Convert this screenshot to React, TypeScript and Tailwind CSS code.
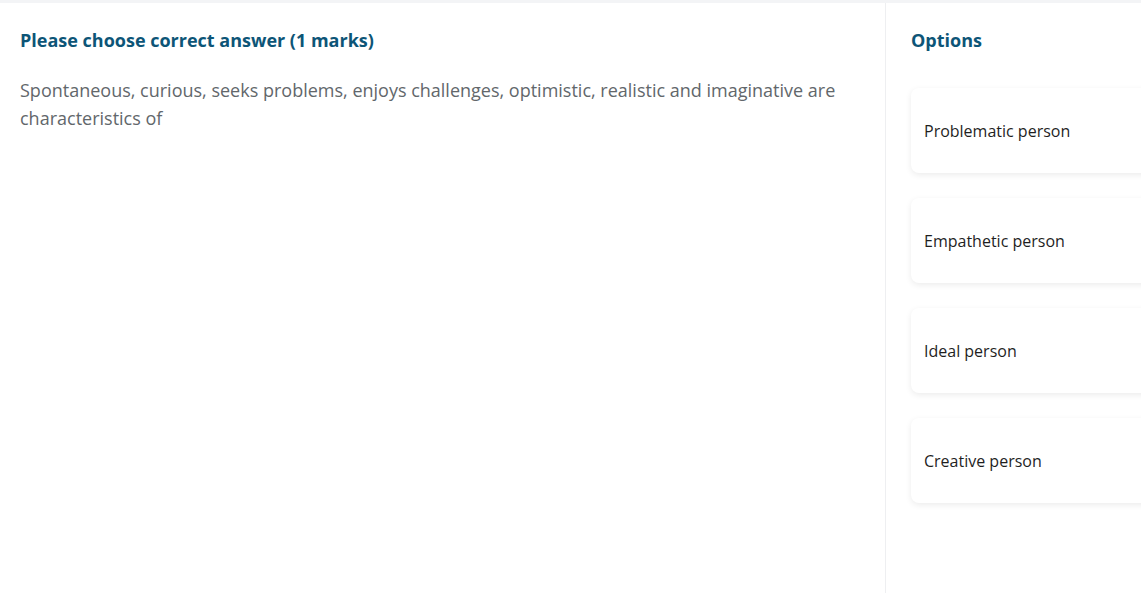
import React from "react";

const options = [
  "Problematic person",
  "Empathetic person",
  "Ideal person",
  "Creative person",
];

const App = () => {
  return (
    <div
      className="w-[1141px] h-[593px] overflow-hidden bg-white flex flex-col"
      style={{ fontFamily: '"Open Sans", sans-serif' }}
    >
      <div className="h-[3px] bg-[#f3f4f6] shrink-0" />
      <div className="flex flex-1">
        <div className="w-[886px] shrink-0 pl-5 pr-4 pt-[25px] border-r border-[#eeeff1]">
          <h2 className="text-[18px] font-bold text-[#0d5577] leading-[24px]">
            Please choose correct answer (1 marks)
          </h2>
          <p className="mt-[24px] text-[18px] leading-[28px] text-[#62676b]">
            Spontaneous, curious, seeks problems, enjoys challenges, optimistic,
            realistic and imaginative are characteristics of
          </p>
        </div>
        <div className="flex-1 pl-[25px] pt-[25px] min-w-0">
          <h3 className="text-[18px] font-bold text-[#0d5577] leading-[24px]">
            Options
          </h3>
          <div className="mt-[36px] flex flex-col gap-[25px] w-[260px]">
            {options.map((opt) => (
              <div
                key={opt}
                className="h-[85px] rounded-lg bg-white shadow-[0_2px_6px_rgba(0,0,0,0.08)] flex items-center px-[13px] text-[16px] text-[#1f1f1f]"
              >
                {opt}
              </div>
            ))}
          </div>
        </div>
      </div>
    </div>
  );
};

export default App;
